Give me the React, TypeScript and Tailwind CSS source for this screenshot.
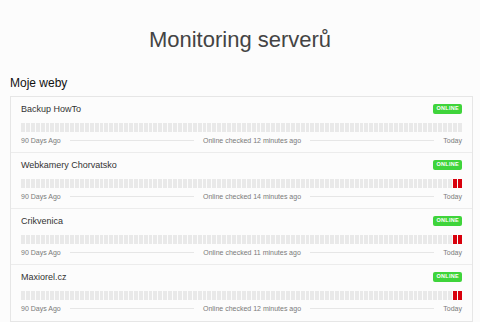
import React from 'react'

interface Site {
  name: string;
  checked: number;
  down: number;
}

const sites: Site[] = [
  { name: 'Backup HowTo', checked: 12, down: 0 },
  { name: 'Webkamery Chorvatsko', checked: 14, down: 2 },
  { name: 'Crikvenica', checked: 11, down: 2 },
  { name: 'Maxiorel.cz', checked: 12, down: 2 },
]

const Bars = ({ down }: { down: number }) => {
  const days = Array.from({ length: 90 }, (_, i) => i)
  return (
    <div className="flex h-[9px] gap-px">
      {days.map((d) => (
        <div
          key={d}
          className={d >= 90 - down ? 'flex-1 bg-[#d8000c]' : 'flex-1 bg-[#e9e9e9]'}
        />
      ))}
    </div>
  )
}

const SiteRow = ({ site }: { site: Site }) => {
  return (
    <div className="h-[56px] border-b border-[#ececec] px-[10px] pt-[6px] last:border-b-0">
      <div className="flex h-[12px] items-center justify-between">
        <p className="text-[9px] leading-none text-[#333]">{site.name}</p>
        <span className="rounded-[2px] bg-[#3fd43b] px-[3px] py-[2px] text-[5.5px] font-bold leading-none tracking-[0.3px] text-white">
          ONLINE
        </span>
      </div>
      <div className="mt-[8px]">
        <Bars down={site.down} />
      </div>
      <div className="mt-[5px] flex items-center gap-[9px] text-[7px] leading-none text-[#7a7a7a]">
        <span>90 Days Ago</span>
        <div className="h-px flex-1 bg-[#e6e6e6]" />
        <span>Online checked {site.checked} minutes ago</span>
        <div className="h-px flex-1 bg-[#e6e6e6]" />
        <span>Today</span>
      </div>
    </div>
  )
}

export default function App() {
  return (
    <div className="h-[322px] overflow-hidden bg-[#fcfcfc] font-['Liberation_Sans',Arial,sans-serif]">
      <h1 className="pt-[26px] text-center text-[22px] leading-[28px] text-[#444]">
        Monitoring serverů
      </h1>
      <h2 className="mt-[22px] pl-[10px] text-[12px] leading-[14px] text-[#111]">
        Moje weby
      </h2>
      <div className="mx-[10px] mt-[6px] w-[463px] border border-[#e6e6e6] bg-[#fcfcfc]">
        {sites.map((s) => (
          <SiteRow key={s.name} site={s} />
        ))}
      </div>
    </div>
  )
}
